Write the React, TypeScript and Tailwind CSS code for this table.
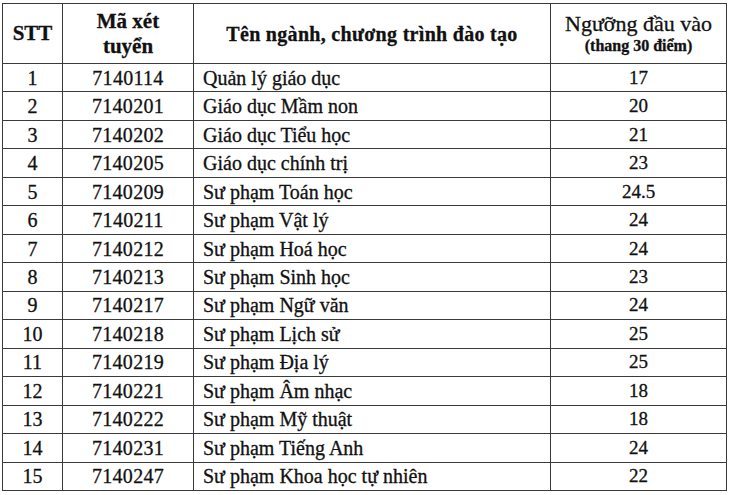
import React from "react";

const rows: [string, string, string, string][] = [
  ["1", "7140114", "Quản lý giáo dục", "17"],
  ["2", "7140201", "Giáo dục Mầm non", "20"],
  ["3", "7140202", "Giáo dục Tiểu học", "21"],
  ["4", "7140205", "Giáo dục chính trị", "23"],
  ["5", "7140209", "Sư phạm Toán học", "24.5"],
  ["6", "7140211", "Sư phạm Vật lý", "24"],
  ["7", "7140212", "Sư phạm Hoá học", "24"],
  ["8", "7140213", "Sư phạm Sinh học", "23"],
  ["9", "7140217", "Sư phạm Ngữ văn", "24"],
  ["10", "7140218", "Sư phạm Lịch sử", "25"],
  ["11", "7140219", "Sư phạm Địa lý", "25"],
  ["12", "7140221", "Sư phạm Âm nhạc", "18"],
  ["13", "7140222", "Sư phạm Mỹ thuật", "18"],
  ["14", "7140231", "Sư phạm Tiếng Anh", "24"],
  ["15", "7140247", "Sư phạm Khoa học tự nhiên", "22"],
];

export default function App() {
  return (
    <div className="w-[730px] h-[495px] bg-white pt-[3px] pl-[2px] text-[#111] [-webkit-text-stroke:0.3px_#111] font-['Liberation_Serif','Times_New_Roman',serif]">
      <table className="border-collapse table-fixed w-[724px]">
        <colgroup>
          <col className="w-[60px]" />
          <col className="w-[131px]" />
          <col className="w-[357px]" />
          <col className="w-[176px]" />
        </colgroup>
        <thead>
          <tr className="h-[60px]">
            <th className="border-[1.5px] border-[#3a3a3a] text-[21px] font-bold text-center align-middle p-0">
              STT
            </th>
            <th className="border-[1.5px] border-[#3a3a3a] text-[21px] font-bold text-center align-middle p-0 leading-[25px]">
              Mã xét
              <br />
              tuyển
            </th>
            <th className="border-[1.5px] border-[#3a3a3a] text-[20px] font-bold text-center align-middle p-0 tracking-[0.3px]">
              Tên ngành, chương trình đào tạo
            </th>
            <th className="border-[1.5px] border-[#3a3a3a] text-center align-top p-0 pt-[8px]">
              <div className="text-[22px] font-normal leading-[24px]">Ngưỡng đầu vào</div>
              <div className="text-[16px] font-bold leading-[20px]">(thang 30 điểm)</div>
            </th>
          </tr>
        </thead>
        <tbody>
          {rows.map((r) => (
            <tr key={r[0]} className="h-[28.47px]">
              <td className="border-[1.5px] border-[#3a3a3a] text-[20px] text-center p-0 leading-[22px]">
                {r[0]}
              </td>
              <td className="border-[1.5px] border-[#3a3a3a] text-[20px] text-center p-0 leading-[22px] tracking-[0.3px]">
                {r[1]}
              </td>
              <td className="border-[1.5px] border-[#3a3a3a] text-[20px] text-left pl-[9px] p-0 leading-[22px]">
                {r[2]}
              </td>
              <td className="border-[1.5px] border-[#3a3a3a] text-[19px] text-center p-0 leading-[22px]">
                {r[3]}
              </td>
            </tr>
          ))}
        </tbody>
      </table>
    </div>
  );
}
